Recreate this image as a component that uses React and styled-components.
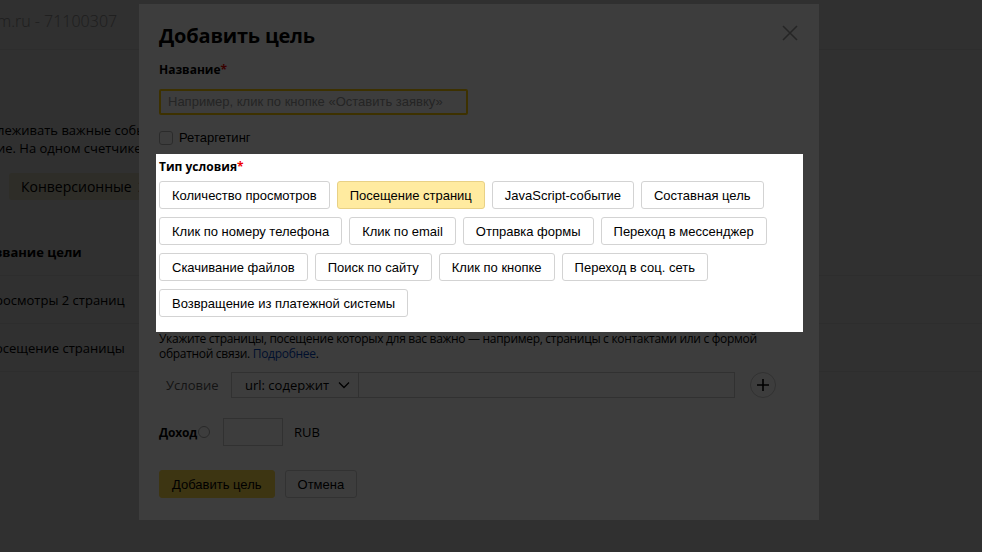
import React from 'react';
import styled, { createGlobalStyle } from 'styled-components';

const GlobalStyle = createGlobalStyle`
  html, body {
    margin: 0;
    padding: 0;
    overflow: hidden;
    background: #fff;
  }
  * { box-sizing: border-box; }
`

const Page = styled.div`
  position: relative;
  width: 982px;
  height: 552px;
  overflow: hidden;
  background: #fff;
  font-family: "Open Sans", "Liberation Sans", sans-serif;
  color: #000;
`

const PageHeader = styled.div`
  height: 50px;
  border-bottom: 1px solid #f0f0f0;
  padding-top: 10px;
  margin-left: -3px;
  font-size: 16px;
  line-height: 22px;
  font-weight: 300;
  color: #a0a0a0;
`

const PageText = styled.p`
  margin: 71px 0 0 -3px;
  font-size: 13px;
  line-height: 18px;
  white-space: nowrap;
`

const Tabs = styled.div`
  display: flex;
  margin: 16px 0 0 9px;
`

const Tab = styled.div`
  height: 27px;
  padding: 0 12px;
  border-radius: 3px;
  background: #f6efd6;
  font-size: 14px;
  line-height: 27px;
  span { color: #777; margin-left: 6px; }
`

const GoalTable = styled.div`
  margin: 28px 0 0 -5px;
`

const GoalRow = styled.div`
  height: 48px;
  display: flex;
  align-items: center;
  font-size: 13px;
  font-weight: ${p => (p.$head ? 700 : 400)};
  border-bottom: 1px solid #f2f2f2;
`

const Backdrop = styled.div`
  position: absolute;
  inset: 0;
  background: rgba(0, 0, 0, 0.22);
`

const Modal = styled.div`
  position: absolute;
  left: 139px;
  top: 4px;
  width: 680px;
  padding: 19px 20px 22px;
  background: #fff;
  z-index: 2;
  font-family: "Liberation Sans", Arial, sans-serif;
  font-size: 13px;
`

const Close = styled.button`
  position: absolute;
  right: 20px;
  top: 20px;
  width: 18px;
  height: 18px;
  padding: 0;
  border: 0;
  background: none;
  color: #9c9c9c;
  display: flex;
`

const Title = styled.h2`
  margin: 0;
  font-family: "Open Sans", "Liberation Sans", sans-serif;
  font-size: 20px;
  line-height: 26px;
  font-weight: 700;
  letter-spacing: -0.2px;
`

const Label = styled.div`
  font-family: "Open Sans", "Liberation Sans", sans-serif;
  font-size: 12px;
  line-height: 16px;
  font-weight: 700;
  margin-top: ${p => p.$top || 0}px;
  &::after {
    content: '*';
    color: #e00;
  }
`

const NameInput = styled.div`
  width: 309px;
  height: 26px;
  margin-top: 11px;
  border: 2px solid #ffcc00;
  border-radius: 2px;
  padding-left: 7px;
  color: #999;
  line-height: 22px;
  white-space: nowrap;
`

const CheckRow = styled.label`
  display: flex;
  align-items: center;
  gap: 6px;
  margin-top: 16px;
  height: 14px;
  line-height: 14px;
`

const Box = styled.span`
  width: 14px;
  height: 14px;
  border: 1px solid #b5b5b5;
  border-radius: 3px;
`

const Spotlight = styled.section`
  position: relative;
  z-index: 5;
  margin: 9px -4px 0 -3px;
  padding: 5px 4px 15px 3px;
  background: #fff;
  box-shadow: 0 0 0 2000px rgba(0, 0, 0, 0.76);
`

const Choices = styled.div`
  display: flex;
  flex-wrap: wrap;
  gap: 8px 7px;
  margin-top: 6px;
`

const Choice = styled.button`
  height: 28px;
  padding: 0 12px;
  border: 1px solid ${p => (p.$active ? '#e8d186' : '#d3d3d3')};
  border-radius: 3px;
  background: ${p => (p.$active ? '#ffeba0' : '#fff')};
  font-family: "Liberation Sans", Arial, sans-serif;
  font-size: 13px;
  color: #000;
  white-space: nowrap;
`

const Hint = styled.p`
  margin: -1px 0 0;
  font-family: "Open Sans", "Liberation Sans", sans-serif;
  font-size: 12px;
  line-height: 15px;
  letter-spacing: -0.3px;
  white-space: nowrap;
  a { color: #04b; text-decoration: none; }
`

const CondRow = styled.div`
  display: flex;
  align-items: center;
  margin-top: 11px;
  height: 26px;
`

const CondLabel = styled.span`
  width: 72px;
  padding-left: 7px;
  font-family: "Open Sans", "Liberation Sans", sans-serif;
  color: #555;
`

const Select = styled.div`
  width: 127px;
  height: 26px;
  display: flex;
  align-items: center;
  justify-content: space-between;
  padding: 0 8px 0 13px;
  border: 1px solid #ccc;
  border-right: 0;
  font-family: "Open Sans", "Liberation Sans", sans-serif;
`

const Field = styled.div`
  width: ${p => p.$w}px;
  height: ${p => p.$h || 26}px;
  border: 1px solid #ccc;
`

const PlusButton = styled.span`
  width: 26px;
  height: 26px;
  margin-left: 15px;
  border: 1px solid #ccc;
  border-radius: 50%;
  display: flex;
  align-items: center;
  justify-content: center;
`

const IncomeRow = styled.div`
  display: flex;
  align-items: center;
  margin-top: 20px;
  font-family: "Open Sans", "Liberation Sans", sans-serif;
  b { font-size: 12px; letter-spacing: -0.2px; }
  em { font-style: normal; margin-left: 11px; }
`

const Help = styled.span`
  width: 12px;
  height: 12px;
  margin: 0 13px 0 1px;
  border: 1px solid #aaa;
  border-radius: 50%;
`

const Actions = styled.div`
  display: flex;
  gap: 10px;
  margin-top: 24px;
`

const ActionButton = styled.button`
  height: 28px;
  padding: 0 12px;
  border: 1px solid ${p => (p.$primary ? '#ffdb4d' : '#d0d0d0')};
  border-radius: 3px;
  background: ${p => (p.$primary ? '#ffdb4d' : '#fff')};
  font-family: "Liberation Sans", Arial, sans-serif;
  font-size: 13px;
  color: #000;
`

const goalTypes = [
  'Количество просмотров',
  'Посещение страниц',
  'JavaScript-событие',
  'Составная цель',
  'Клик по номеру телефона',
  'Клик по email',
  'Отправка формы',
  'Переход в мессенджер',
  'Скачивание файлов',
  'Поиск по сайту',
  'Клик по кнопке',
  'Переход в соц. сеть',
  'Возвращение из платежной системы',
]

export default function App() {
  return (
    <Page>
      <GlobalStyle />
      <PageHeader>m.ru - 71100307</PageHeader>
      <PageText>
        леживать важные события на сайте: клики, отправку форм, посещения страниц<br />
        ие. На одном счетчике можно создать до 200 целей
      </PageText>
      <Tabs>
        <Tab>Конверсионные<span>2</span></Tab>
      </Tabs>
      <GoalTable>
        <GoalRow $head>звание цели</GoalRow>
        <GoalRow>росмотры 2 страниц</GoalRow>
        <GoalRow>осещение страницы</GoalRow>
      </GoalTable>

      <Backdrop />
      <Modal>
        <Close aria-label="Закрыть">
          <svg width="18" height="18" viewBox="0 0 18 18">
            <path d="M2 2 L16 16 M16 2 L2 16" stroke="currentColor" strokeWidth="1.6" />
          </svg>
        </Close>
        <Title>Добавить цель</Title>
        <Label $top={13}>Название</Label>
        <NameInput>Например, клик по кнопке «Оставить заявку»</NameInput>
        <CheckRow>
          <Box />
          Ретаргетинг
        </CheckRow>

        <Spotlight>
          <Label>Тип условия</Label>
          <Choices>
            {goalTypes.map(t => (
              <Choice key={t} $active={t === 'Посещение страниц'}>{t}</Choice>
            ))}
          </Choices>
        </Spotlight>

        <Hint>
          Укажите страницы, посещение которых для вас важно — например, страницы с контактами или с формой<br />
          обратной связи. <a href="#">Подробнее</a>.
        </Hint>
        <CondRow>
          <CondLabel>Условие</CondLabel>
          <Select>
            url: содержит
            <svg width="12" height="8" viewBox="0 0 12 8">
              <path d="M1 1.5 L6 6.5 L11 1.5" fill="none" stroke="#000" strokeWidth="1.3" />
            </svg>
          </Select>
          <Field $w={377} />
          <PlusButton>
            <svg width="12" height="12" viewBox="0 0 12 12">
              <path d="M6 0 V12 M0 6 H12" stroke="#000" strokeWidth="1.6" />
            </svg>
          </PlusButton>
        </CondRow>
        <IncomeRow>
          <b>Доход</b>
          <Help />
          <Field $w={60} $h={28} />
          <em>RUB</em>
        </IncomeRow>
        <Actions>
          <ActionButton $primary>Добавить цель</ActionButton>
          <ActionButton>Отмена</ActionButton>
        </Actions>
      </Modal>
    </Page>
  );
}
